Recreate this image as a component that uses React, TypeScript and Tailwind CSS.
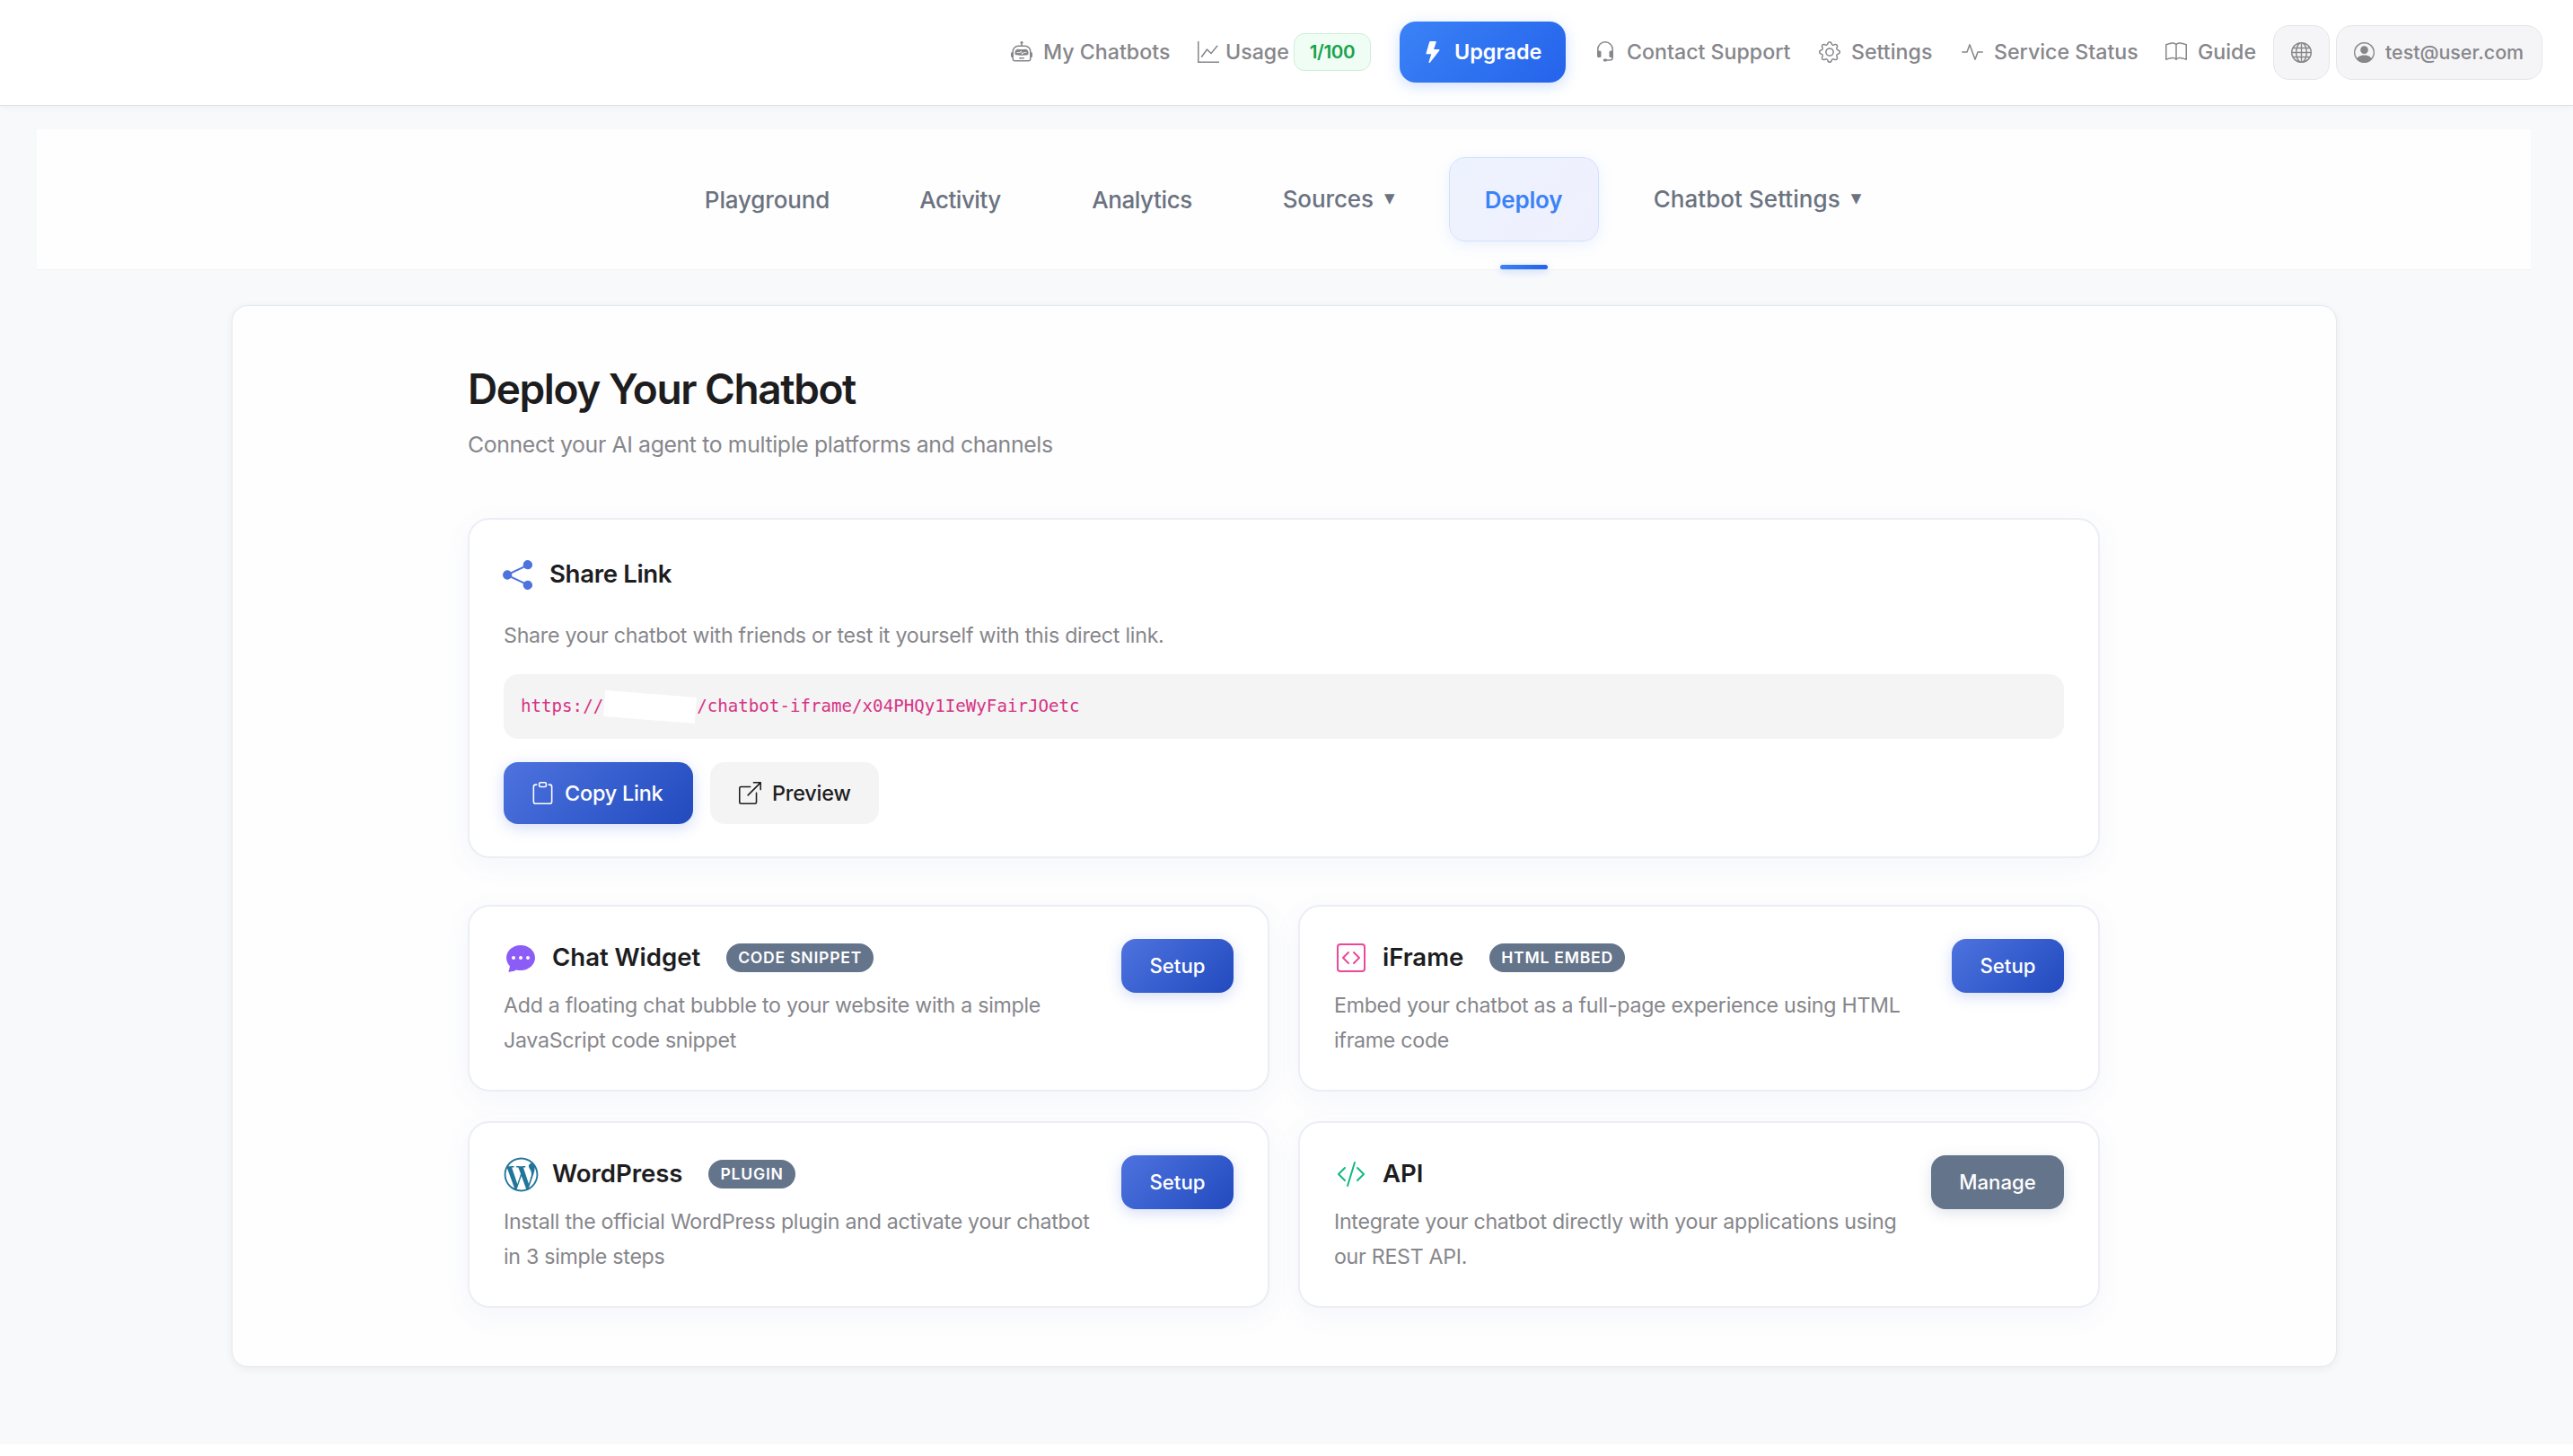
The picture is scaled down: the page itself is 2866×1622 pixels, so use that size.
import type { ReactNode } from "react";
import type { IconType } from "react-icons";
import {
  BsActivity,
  BsBook,
  BsBoxArrowUpRight,
  BsChatDotsFill,
  BsClipboard,
  BsCodeSlash,
  BsCodeSquare,
  BsGear,
  BsGlobe,
  BsGraphUp,
  BsHeadset,
  BsLightningFill,
  BsPersonCircle,
  BsRobot,
  BsShareFill,
} from "react-icons/bs";
import { FaWordpressSimple } from "react-icons/fa";
import clsx from "clsx";

const links = [
  { label: "Contact Support", icon: BsHeadset, width: "w-[250px]" },
  { label: "Settings", icon: BsGear, width: "w-[159px]" },
  { label: "Service Status", icon: BsActivity, width: "w-[227px]" },
  { label: "Guide", icon: BsBook, width: "w-[120px]" },
];

const tabs = [
  { label: "Playground", width: "w-[218px]", tracking: "tracking-[-0.15px]" },
  { label: "Activity", width: "w-[172px]", tracking: "tracking-[-0.5px]" },
  { label: "Analytics", width: "w-[193px]", tracking: "tracking-[-0.4px]" },
  { label: "Sources", width: "w-[205px]", tracking: "tracking-[-0.1px]", menu: true },
  { label: "Deploy", width: "w-[167px]", tracking: "tracking-[-0.2px]", active: true },
  { label: "Chatbot Settings", width: "w-[314px]", tracking: "tracking-[0.05px]", menu: true },
];

const channels = [
  {
    title: "Chat Widget",
    badge: "CODE SNIPPET",
    text: ["Add a floating chat bubble to your website with a simple", "JavaScript code snippet"],
    icon: BsChatDotsFill,
    iconClass: "size-8 text-[#8b5cf6]",
    action: "Setup",
  },
  {
    title: "iFrame",
    badge: "HTML EMBED",
    text: ["Embed your chatbot as a full-page experience using HTML", "iframe code"],
    icon: BsCodeSquare,
    iconClass: "size-8 text-[#ec4899]",
    action: "Setup",
  },
  {
    title: "WordPress",
    badge: "PLUGIN",
    text: ["Install the official WordPress plugin and activate your chatbot", "in 3 simple steps"],
    icon: FaWordpressSimple,
    iconClass: "size-[39px] text-[#21759b]",
    action: "Setup",
  },
  {
    title: "API",
    text: ["Integrate your chatbot directly with your applications using", "our REST API."],
    icon: BsCodeSlash,
    iconClass: "size-8 text-[#10b981]",
    action: "Manage",
  },
];

function NavLink({ icon: Icon, label, width }: { icon: IconType; label: string; width: string }) {
  return (
    <a className={clsx("flex shrink-0 items-center gap-3 whitespace-nowrap", width)}>
      <Icon className="size-6 shrink-0" />
      {label}
    </a>
  );
}

function Header() {
  return (
    <header className="flex h-[118px] items-center justify-end border-b border-[#dfe1e5] bg-white pb-px pr-[34px] text-[23.2px] font-medium text-[#86868b] shadow-[0_2px_8px_rgba(0,0,0,0.04)]">
      <NavLink icon={BsRobot} label="My Chatbots" width="w-[208px]" />
      <a className="flex w-[107px] items-center gap-[7px]">
        <BsGraphUp className="size-6 shrink-0" />
        Usage
      </a>
      <span className="flex h-[42px] w-[86px] items-center justify-center rounded-xl border border-[#cdeed8] bg-[#f0fdf4] text-[20.6px] font-semibold tracking-[-0.4px] text-[#16a34a]">
        1/100
      </span>
      <button className="ml-8 mr-8 flex h-[68px] w-[185px] items-center gap-3 rounded-[18px] bg-linear-135 from-[#3b82f6] to-[#2563eb] pl-[25px] text-[23.4px] font-semibold text-white shadow-[0_4px_16px_rgba(59,130,246,0.25)]">
        <BsLightningFill className="size-6" />
        Upgrade
      </button>
      {links.map((link) => (
        <NavLink key={link.label} {...link} />
      ))}
      <button className="flex h-[61px] w-[63px] items-center justify-center rounded-[18px] border border-[#e5e5e8] bg-[#f5f5f7]">
        <BsGlobe className="size-[23px]" />
      </button>
      <button className="ml-[7px] flex h-[61px] w-[230px] items-center gap-3 rounded-[18px] border border-[#e5e5e8] bg-[#f5f5f7] pl-[19px] text-[21.4px]">
        <BsPersonCircle className="size-[23px]" />
        test@user.com
      </button>
    </header>
  );
}

function TabBar() {
  return (
    <nav className="mt-[26px] flex h-[157px] items-center justify-center gap-5 border-b border-[#f1f2f4] bg-[#fefefe] text-[26px] font-medium text-[#6b7280]">
      {tabs.map((tab) => (
        <a
          key={tab.label}
          className={clsx(
            "relative flex h-[94px] shrink-0 items-center justify-center whitespace-nowrap rounded-[18px]",
            tab.width,
            tab.tracking,
            tab.menu && "pb-px",
            tab.active &&
              "border border-[#d3e1fd] bg-linear-135 from-[#edf3fe] to-[#eff0fd] font-semibold text-[#3b82f6] shadow-[0_4px_16px_rgba(59,130,246,0.1)]",
          )}
        >
          {tab.label}
          {tab.menu && (
            <span className="ml-3 font-['DejaVu_Sans'] text-[15px] leading-none">▼</span>
          )}
          {tab.active && (
            <span className="absolute -bottom-8 left-14 h-[5px] w-[53px] rounded-[3px] bg-linear-to-r from-[#3b82f6] to-[#2563eb] shadow-[0_2px_8px_rgba(59,130,246,0.3)]" />
          )}
        </a>
      ))}
    </nav>
  );
}

function Card({ className, children }: { className?: string; children: ReactNode }) {
  return (
    <div
      className={clsx(
        "rounded-3xl border-2 border-[#eceef5] bg-white px-[38px] shadow-[0_8px_32px_rgba(79,110,223,0.06)]",
        className,
      )}
    >
      {children}
    </div>
  );
}

function ShareCard() {
  return (
    <Card className="mt-[62px] h-[379px] pt-[41px]">
      <div className="-ml-px flex h-10 items-center gap-[19px]">
        <BsShareFill className="size-[33px] text-[#4e73df]" />
        <h2 className="text-[27.6px] font-semibold tracking-[-0.35px] text-[#1d1d1f]">Share Link</h2>
      </div>
      <p className="mt-[29px] text-[23.2px] leading-[38px] tracking-[-0.25px] text-[#86868b]">
        Share your chatbot with friends or test it yourself with this direct link.
      </p>
      <div className="mt-6 flex h-[72px] items-center rounded-2xl bg-[#f4f4f4] pl-[19px] font-['DejaVu_Sans_Mono'] text-[19.15px] text-[#d63384]">
        https://
        <span className="mx-px h-[29px] w-[102px] rotate-[4.5deg] bg-white" />
        /chatbot-iframe/x04PHQy1IeWyFairJOetc
      </div>
      <div className="mt-[26px] flex gap-[19px] text-[23.4px] font-medium tracking-[-0.2px]">
        <button className="flex h-[69px] w-[211px] items-center gap-3 rounded-2xl bg-linear-135 from-[#4e73df] to-[#224abe] pl-[31px] text-white shadow-[0_4px_16px_rgba(78,115,223,0.25)]">
          <BsClipboard className="size-[25px]" />
          Copy Link
        </button>
        <button className="flex h-[69px] w-[188px] items-center gap-3 rounded-2xl bg-[#f4f4f4] pl-8 text-[#1d1d1f]">
          <BsBoxArrowUpRight className="size-[25px]" />
          Preview
        </button>
      </div>
    </Card>
  );
}

function ChannelCard({ title, badge, text, icon: Icon, iconClass, action }: (typeof channels)[number]) {
  return (
    <Card className="flex h-[208px] items-start justify-between">
      <div className="pt-[37px]">
        <div className="flex h-10 items-center">
          <span className="flex w-[38px] shrink-0 justify-center">
            <Icon className={clsx("shrink-0", iconClass)} />
          </span>
          <h3 className="ml-4 text-[27.6px] font-semibold tracking-[-0.05px] text-[#1d1d1f]">{title}</h3>
          {badge && (
            <span className="ml-[29px] flex h-8 items-center rounded-full bg-[#64748b] px-[13px] text-[17.6px] font-semibold tracking-[0.75px] text-white">
              {badge}
            </span>
          )}
        </div>
        <p className="mt-3.5 whitespace-nowrap text-[23.2px] leading-[38.5px] tracking-[-0.28px] text-[#86868b]">
          {text[0]}
          <br />
          {text[1]}
        </p>
      </div>
      <button
        className={clsx(
          "mt-9 flex h-[60px] shrink-0 items-center justify-center rounded-2xl text-[22.2px] font-medium text-white",
          action === "Manage"
            ? "w-[148px] bg-[#64748b] shadow-[0_4px_16px_rgba(100,116,139,0.2)]"
            : "w-[125px] bg-linear-135 from-[#4e73df] to-[#224abe] shadow-[0_4px_16px_rgba(78,115,223,0.25)]",
        )}
      >
        {action}
      </button>
    </Card>
  );
}

export default function App() {
  return (
    <div className="min-h-[1622px] bg-white font-[Inter,sans-serif]">
      <div className="h-[1609px] bg-[#f8f9fb]">
        <Header />
        <div className="ml-[41px] w-[2778px]">
          <TabBar />
          <main className="mx-auto mt-[39px] h-[1183px] w-[2345px] rounded-[18px] border border-[#e2e8f0] bg-[#fefefe] pt-16 shadow-[0_2px_10px_rgba(0,0,0,0.06)]">
            <div className="mx-auto w-[1818px]">
              <h1 className="text-[46px] font-semibold leading-[56px] tracking-[-1.43px] text-[#1d1d1f]">
                Deploy Your Chatbot
              </h1>
              <p className="mt-3.5 text-[24.8px] leading-10 tracking-[-0.37px] text-[#86868b]">
                Connect your AI agent to multiple platforms and channels
              </p>
              <ShareCard />
              <div className="mt-[52px] grid grid-cols-2 gap-x-8 gap-y-[33px]">
                {channels.map((channel) => (
                  <ChannelCard key={channel.title} {...channel} />
                ))}
              </div>
            </div>
          </main>
        </div>
      </div>
    </div>
  );
}
